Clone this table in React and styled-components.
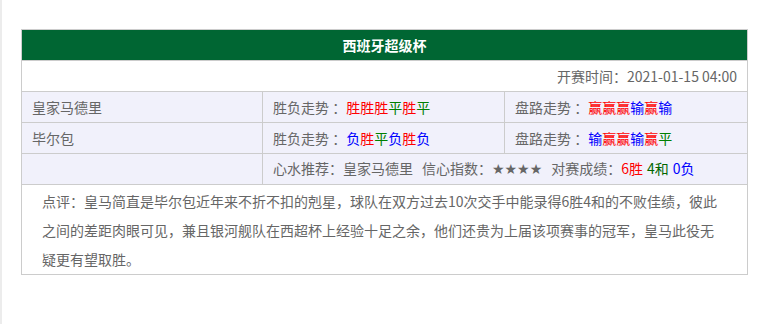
import React from "react";
import styled, { createGlobalStyle } from "styled-components";

const GlobalStyle = createGlobalStyle`
  html, body {
    margin: 0;
    padding: 0;
    background: #fff;
  }
  body {
    font-family: "Noto Sans CJK SC", "Liberation Sans", sans-serif;
  }
`;

const Page = styled.div`
  min-height: 324px;
  box-sizing: border-box;
  border-left: 2px solid #ececec;
  padding: 29px 0 0 19px;
`;

const Table = styled.table`
  width: 726px;
  border-collapse: collapse;
  border: 1px solid #ccc;
  font-size: 14px;
  color: #666;
  table-layout: fixed;
`;

const Title = styled.th`
  height: 30px;
  padding: 0;
  background: #006633;
  color: #fff;
  font-weight: bold;
  font-size: 14px;
  text-align: center;
  border: 1px solid #ccc;
`;

const Cell = styled.td`
  height: 30px;
  padding: 0 10px;
  line-height: 29px;
  border: 1px solid #ccc;
  background: ${(p) => (p.$plain ? "#fff" : "#f1f1fb")};
  text-align: ${(p) => p.$align || "left"};
  white-space: nowrap;
`;

const Comment = styled.td`
  padding: 2px 20px 0;
  line-height: 29px;
  height: 88px;
  box-sizing: border-box;
  vertical-align: top;
  border: 1px solid #ccc;
  background: #fff;
`;

const Mark = styled.span`
  color: ${(p) => p.$c};
`;

const Stars = styled.span`
  font-family: "DejaVu Sans", sans-serif;
  font-size: 14px;
`;

const Gap = styled.span`
  display: inline-block;
  width: ${(p) => p.$w || 9}px;
`;

const colors = {
  胜: "#f00",
  赢: "#f00",
  平: "#008000",
  负: "#00f",
  输: "#00f",
};

const Trend = ({ seq }) =>
  seq.split("").map((ch, i) => (
    <Mark key={i} $c={colors[ch]}>
      {ch}
    </Mark>
  ));

const teams = [
  { name: "皇家马德里", form: "胜胜胜平胜平", handicap: "赢赢赢输赢输" },
  { name: "毕尔包", form: "负胜平负胜负", handicap: "输赢赢输赢平" },
];

export default function App() {
  return (
    <>
      <GlobalStyle />
      <Page>
        <Table>
          <colgroup>
            <col style={{ width: 241 }} />
            <col style={{ width: 242 }} />
            <col style={{ width: 243 }} />
          </colgroup>
          <tbody>
            <tr>
              <Title colSpan={3}>西班牙超级杯</Title>
            </tr>
            <tr>
              <Cell colSpan={3} $plain $align="right">
                开赛时间：2021-01-15 04:00
              </Cell>
            </tr>
            {teams.map((t) => (
              <tr key={t.name}>
                <Cell>{t.name}</Cell>
                <Cell>
                  胜负走势 ：<Trend seq={t.form} />
                </Cell>
                <Cell>
                  盘路走势 ：<Trend seq={t.handicap} />
                </Cell>
              </tr>
            ))}
            <tr>
              <Cell></Cell>
              <Cell colSpan={2}>
                心水推荐：皇家马德里
                <Gap />
                信心指数：<Stars>★★★★</Stars>
                <Gap />
                对赛成绩：<Mark $c="#f00">6胜</Mark>
                <Gap $w={4} />
                <Mark $c="#006600">4和</Mark>
                <Gap $w={4} />
                <Mark $c="#00f">0负</Mark>
              </Cell>
            </tr>
            <tr>
              <Comment colSpan={3}>
                点评：皇马简直是毕尔包近年来不折不扣的剋星，球队在双方过去10次交手中能录得6胜4和的不败佳绩，彼此之间的差距肉眼可见，兼且银河舰队在西超杯上经验十足之余，他们还贵为上届该项赛事的冠军，皇马此役无疑更有望取胜。
              </Comment>
            </tr>
          </tbody>
        </Table>
      </Page>
    </>
  );
}
